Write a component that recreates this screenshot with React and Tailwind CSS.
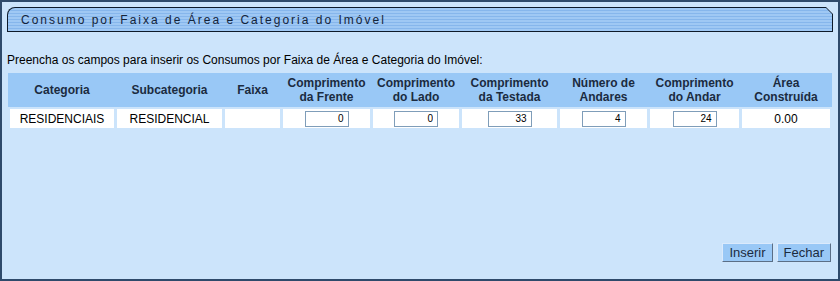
import React from 'react';

const cols = [
    { head: ["Categoria"], w: "RESIDENCIAIS" },
    { head: ["Subcategoria"], w: "RESIDENCIAL" },
    { head: ["Faixa"], w: "" },
    { head: ["Comprimento", "da Frente"], input: "0" },
    { head: ["Comprimento", "do Lado"], input: "0" },
    { head: ["Comprimento", "da Testada"], input: "33" },
    { head: ["Número de", "Andares"], input: "4" },
    { head: ["Comprimento", "do Andar"], input: "24" },
    { head: ["Área", "Construída"], w: "0.00" },
];

const grid = "grid grid-cols-[104px_105px_55px_87px_86px_95px_87px_89px_88px] gap-x-[3px]";

const App = () => {
    return (
        <div className="w-[840px] h-[281px] bg-[#cce4fb] border-2 border-[#2e4a6b] flex flex-col font-['Liberation_Sans',Arial,sans-serif] text-black overflow-hidden">
            {/* --- TITLE BAR --- */}
            <div className="mt-[5px] mx-[5px] h-[25px] bg-[#0d1a2a] p-px rounded-tl-[8px] [clip-path:polygon(0_0,calc(100%-7px)_0,100%_7px,100%_100%,0_100%)]">
                <div className="h-full rounded-tl-[7px] bg-[repeating-linear-gradient(180deg,#9fc8f4_0px,#9fc8f4_2px,#86b6ec_2px,#86b6ec_3px)] [clip-path:polygon(0_0,calc(100%-6px)_0,100%_6px,100%_100%,0_100%)] flex items-center pl-[13px]">
                    <span className="text-[12px] tracking-[2px] text-[#14243a]">Consumo por Faixa de Área e Categoria do Imóvel</span>
                </div>
            </div>

            <p className="mt-[21px] ml-[5px] text-[12px] leading-[14px]">Preencha os campos para inserir os Consumos por Faixa de Área e Categoria do Imóvel:</p>

            {/* --- TABLE --- */}
            <div className="mt-[6px] mx-[6px] pb-[3px]">
                <div className={`${grid} bg-[#99c8f6] h-[34px] px-[2px] items-center`}>
                    {cols.map((c, i) => (
                        <div key={i} className="text-center text-[12px] font-bold leading-[14px] text-[#1b2b40]">
                            {c.head.map((h, j) => <div key={j}>{h}</div>)}
                        </div>
                    ))}
                </div>
                <div className={`${grid} mt-[2px] px-[2px] h-[19px]`}>
                    {cols.map((c, i) => (
                        <div key={i} className="bg-white flex items-center justify-center text-[12px]">
                            {c.input !== undefined ? (
                                <input
                                    readOnly
                                    value={c.input}
                                    className="w-[44px] h-[16px] border border-[#7f9db9] bg-white text-right text-[10px] pr-[4px] outline-none"
                                />
                            ) : (
                                <span>{c.w}</span>
                            )}
                        </div>
                    ))}
                </div>
            </div>

            {/* --- BUTTONS --- */}
            <div className="mt-auto mb-[17px] mr-[7px] flex justify-end gap-[4px]">
                <button className="h-[19px] px-[6px] bg-[#99c8f6] border border-t-[#dbeafc] border-l-[#dbeafc] border-r-[#5a6e86] border-b-[#5a6e86] text-[13px] leading-[15px] text-[#1b2b40]">Inserir</button>
                <button className="h-[19px] px-[6px] bg-[#99c8f6] border border-t-[#dbeafc] border-l-[#dbeafc] border-r-[#5a6e86] border-b-[#5a6e86] text-[13px] leading-[15px] text-[#1b2b40]">Fechar</button>
            </div>
        </div>
    );
};

export default App;
